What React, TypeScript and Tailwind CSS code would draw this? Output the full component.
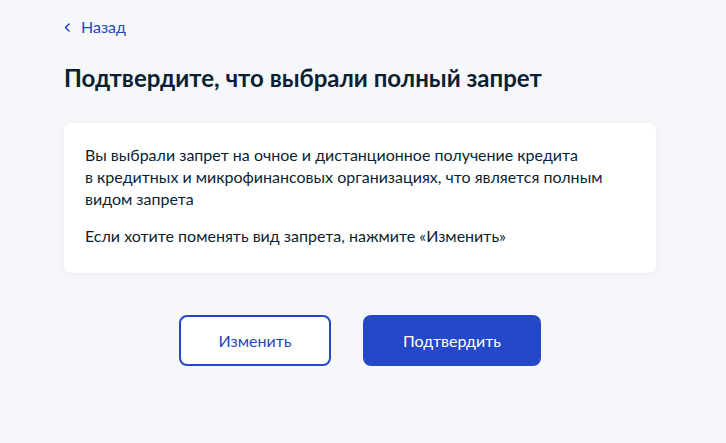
export default function App() {
  return (
    <div className="min-h-screen w-full bg-[#f5f7fa] font-['Lato',sans-serif] text-[#0b1f33]">
      <div className="px-[64px] pt-[17px]">
        {/* Back link */}
        <button className="flex items-center gap-[11px] text-[16px] leading-[20px] text-[#2947b8]">
          <svg width="6" height="9" viewBox="0 0 6 9" fill="none" stroke="currentColor" strokeWidth="1.6" strokeLinecap="round" strokeLinejoin="round">
            <path d="M5 1L1.5 4.5L5 8" />
          </svg>
          <span>Назад</span>
        </button>

        <h1 className="mt-[26px] text-[24px] font-bold leading-[30px]">
          Подтвердите, что выбрали полный запрет
        </h1>

        {/* Card */}
        <div className="mt-[30px] w-[592px] rounded-[8px] bg-white pl-[21px] pr-[40px] pt-[21px] pb-[26px] shadow-[0_1px_6px_rgba(11,31,51,0.05)]">
          <p className="text-[16px] leading-[22px]">
            Вы выбрали запрет на очное и дистанционное получение кредита
            <br />
            в кредитных и микрофинансовых организациях, что является полным видом запрета
          </p>
          <p className="mt-[15px] text-[16px] leading-[22px]">
            Если хотите поменять вид запрета, нажмите «Изменить»
          </p>
        </div>

        {/* Actions */}
        <div className="mt-[42px] flex w-[592px] justify-center gap-[32px]">
          <button className="h-[51px] w-[152px] rounded-[8px] border-2 border-[#2548c8] bg-white text-[16px] text-[#2947b8]">
            Изменить
          </button>
          <button className="h-[51px] w-[178px] rounded-[8px] bg-[#2548c8] text-[16px] text-white">
            Подтвердить
          </button>
        </div>
      </div>
    </div>
  );
}
